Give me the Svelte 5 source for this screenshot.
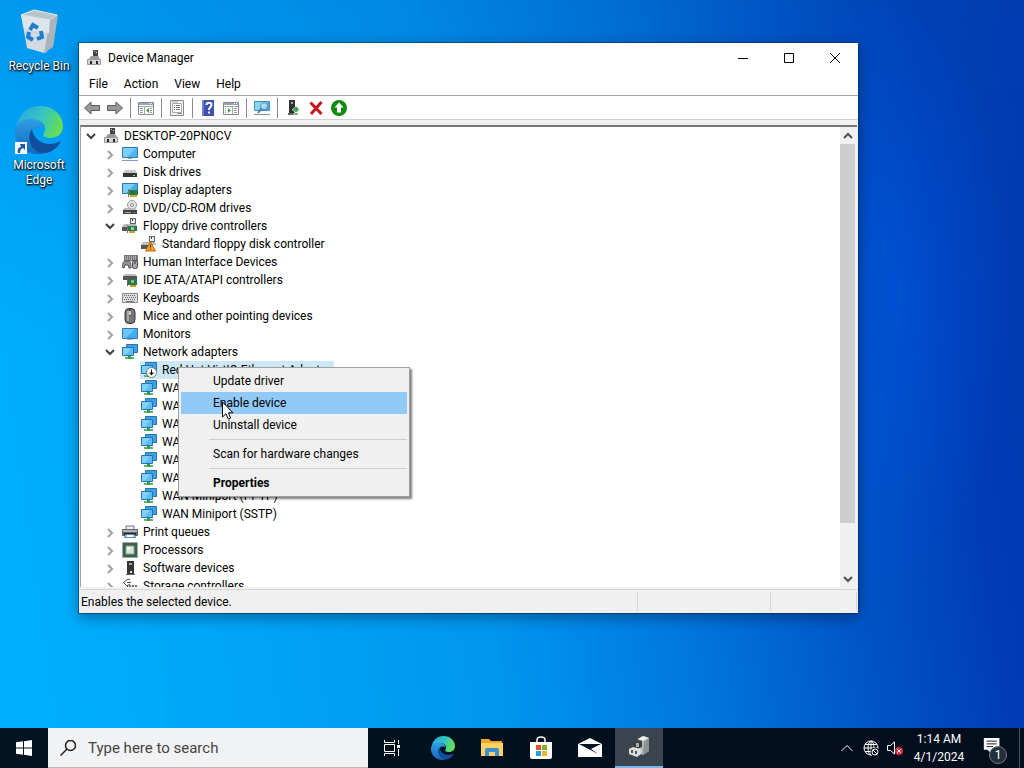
<script lang="ts">
  type Row = { level: number; icon: string; label: string; open?: boolean; selected?: boolean };

  const wan = (kind: string): Row => ({ level: 2, icon: "network", label: `WAN Miniport (${kind})` });

  const rows: Row[] = [
    { level: 0, icon: "devices", label: "DESKTOP-20PN0CV", open: true },
    { level: 1, icon: "computer", label: "Computer", open: false },
    { level: 1, icon: "disk", label: "Disk drives", open: false },
    { level: 1, icon: "display", label: "Display adapters", open: false },
    { level: 1, icon: "dvd", label: "DVD/CD-ROM drives", open: false },
    { level: 1, icon: "floppy", label: "Floppy drive controllers", open: true },
    { level: 2, icon: "warning", label: "Standard floppy disk controller" },
    { level: 1, icon: "hid", label: "Human Interface Devices", open: false },
    { level: 1, icon: "ide", label: "IDE ATA/ATAPI controllers", open: false },
    { level: 1, icon: "keyboard", label: "Keyboards", open: false },
    { level: 1, icon: "mouse", label: "Mice and other pointing devices", open: false },
    { level: 1, icon: "monitor", label: "Monitors", open: false },
    { level: 1, icon: "network", label: "Network adapters", open: true },
    { level: 2, icon: "disabled", label: "Red Hat VirtIO Ethernet Adapter", selected: true },
    wan("IKEv2"),
    wan("IP"),
    wan("IPv6"),
    wan("L2TP"),
    wan("Network Monitor"),
    wan("PPPOE"),
    wan("PPTP"),
    wan("SSTP"),
    { level: 1, icon: "printer", label: "Print queues", open: false },
    { level: 1, icon: "cpu", label: "Processors", open: false },
    { level: 1, icon: "software", label: "Software devices", open: false },
    { level: 1, icon: "storage", label: "Storage controllers", open: false },
  ];

  const menus = ["File", "Action", "View", "Help"];

  const tools = [
    ["back", "Back"],
    ["forward", "Forward"],
    null,
    ["paneLeft", "Show/Hide Console Tree"],
    null,
    ["props", "Properties"],
    null,
    ["help", "Help"],
    ["paneRight", "Show/Hide Action Pane"],
    null,
    ["scan", "Scan for hardware changes"],
    null,
    ["update", "Update driver"],
    ["remove", "Uninstall device"],
    ["enable", "Enable device"],
  ];
</script>

{#snippet icon(name: string)}
  <svg class="icon" viewBox="0 0 16 16" aria-hidden="true">
    {#if name === "devices"}
      <path d="M7 0h5v8H7z" fill="#444" />
      <path d="M8 1h1v1H8zM10 2h1v1h-1z" fill="#ddd" />
      <path d="M3 9l2-3h7l2 3z" fill="#999" />
      <path d="M1.500 9.500h13v5h-13z" fill="#d4d4d4" stroke="#999" />
      <path d="M4 11h2v3H4zM10 11h2v3h-2z" fill="#222" />
    {:else if name === "computer"}
      <path d="M.5 1.500h15v10H.5z" fill="#4fb6f2" stroke="#3379a6" />
      <path d="M1 2h13L5 11H1z" fill="#79d0fa" />
      <path d="M6 12h4v1H6z" fill="#8aa" />
      <path d="M0 14h16v1H0z" fill="#8d9ac0" />
    {:else if name === "disk"}
      <path d="M3 6h10l2 3H1z" fill="#c8c8c8" />
      <path d="M1 9h14v4H1z" fill="#333" />
      <path d="M11 11h2v1h-2z" fill="#6e6" />
    {:else if name === "display"}
      <path d="M.5 1.500h15v10H.5z" fill="#45aeea" stroke="#3379a6" />
      <path d="M1 2h12L4 11H1z" fill="#79d0fa" />
      <path d="M7 8h9v5H7z" fill="#2d7a4b" />
      <path d="M9 9h3v3H9z" fill="#173" />
      <path d="M8 13h7v2H8z" fill="#d5a920" />
      <path d="M6 7h1v8H6z" fill="#777" />
    {:else if name === "dvd"}
      <circle cx="10" cy="5" r="4.500" fill="#e4e4e4" stroke="#999" />
      <circle cx="10" cy="5" r="1.500" fill="#fff" stroke="#888" />
      <path d="M2 8h11l2 2H1z" fill="#bbb" />
      <path d="M1 10h14v4H1z" fill="#444" />
      <path d="M3 12h6v1H3z" fill="#aaa" />
      <path d="M12 12h1v1h-1z" fill="#6e6" />
    {:else if name === "floppy" || name === "warning"}
      <path d="M8 0h6v7H8z" fill="#666" />
      <path d="M9 1h4v4H9z" fill="#eee" />
      <path d="M10 1h1v2h-1z" fill="#444" />
      <path d="M2 6h12l1 3H0z" fill="#bbb" />
      <path d="M0 9h9v4H0z" fill="#555" />
      {#if name === "floppy"}
        <path d="M6 8h9v5H6z" fill="#297a52" />
        <path d="M9 9h3v3H9z" fill="#9c9" />
        <path d="M7 13h6v2H7z" fill="#caa326" />
        <path d="M5 7h1v8H5z" fill="#777" />
      {:else}
        <path d="M9.500 5.500l5 9.500h-10z" fill="#f6a623" stroke="#c2680c" />
        <path d="M9 8.500h1v3H9zM9 12.500h1v1H9z" fill="#222" />
      {/if}
    {:else if name === "hid"}
      <path d="M2 1h14v6H2z" fill="#777" />
      <path d="M3 3h12M3 5h12" stroke="#ddd" stroke-dasharray="1 1" />
      <path d="M1 14c-1-3 0-7 2-7h4c2 0 2 4 2 7H7l-1-3H3l-1 3z" fill="#8d9797" stroke="#555" />
      <rect x="10.500" y="6.500" width="5" height="8" rx="2" fill="#aaa" stroke="#444" />
      <path d="M13 7v3" stroke="#333" />
    {:else if name === "ide"}
      <path d="M3 2h10l2 2H1z" fill="#bbb" />
      <path d="M1 4h14v4H1z" fill="#555" />
      <path d="M6 7h9v6H6z" fill="#2b7446" />
      <path d="M9 8h3v3H9z" fill="#8b8" />
      <path d="M8 13h6v2H8z" fill="#caa326" />
      <path d="M5 6h1v8H5z" fill="#666" />
    {:else if name === "keyboard"}
      <path d="M.5 3.500h15v9H.5z" fill="#ddd" stroke="#888" />
      <path d="M2 5.500h12M3 7.500h11M2 9.500h12" stroke="#666" stroke-dasharray="1 1" />
      <path d="M4 11h8v1H4z" fill="#777" />
    {:else if name === "mouse"}
      <rect x="3" y=".5" width="10" height="15" rx="4" fill="#777" stroke="#333" />
      <path d="M5 3h2v10H5z" fill="#aaa" />
      <path d="M8 1v7" stroke="#222" />
      <path d="M7 3h2v4H7z" fill="#ccc" />
    {:else if name === "monitor"}
      <path d="M.5 2.500h15v10H.5z" fill="#42aef2" stroke="#3379a6" />
      <path d="M1 3h12L4 12H1z" fill="#69c5fa" />
      <path d="M5 13h6v1H5z" fill="#9bd" />
    {:else if name === "network" || name === "disabled"}
      <path d="M4.500 .5h11v8h-11z" fill="#3fa0e8" stroke="#2874a8" />
      <path d="M.5 3.500h11v8H.5z" fill="#5cbcf6" stroke="#2874a8" />
      <path d="M1 4h8l-5 7H1z" fill="#80d1fb" />
      <path d="M6 12h3v1H6z" fill="#387" />
      <path d="M3 13h9v2H3z" fill="#59b96a" />
      <path d="M6 12h3v3H6z" fill="#3c9a50" />
      {#if name === "disabled"}
        <circle cx="10.500" cy="10.500" r="5" fill="#fff" stroke="#777" />
        <path d="M10 7.500h1v3h2l-2.500 3L8 10.500h2z" fill="#111" />
      {/if}
    {:else if name === "printer"}
      <path d="M4 2h8v4H4z" fill="#eef" stroke="#777" />
      <path d="M0 5h16v7H0z" fill="#5f676f" />
      <path d="M1 6h14v2H1z" fill="#aeb5bb" />
      <path d="M2 9h12v2H2z" fill="#222" />
      <path d="M3.500 10.500h9l1 3h-11z" fill="#8fd0f6" stroke="#58a" />
      <path d="M5 11h6v2H5z" fill="#fff" />
    {:else if name === "cpu"}
      <path d="M1 1h14v14H1z" fill="#3c604b" />
      <path d="M.5 .5h15v15H.5z" fill="none" stroke="#365" stroke-dasharray="1 1" />
      <path d="M4 4h8v8H4z" fill="#d8e4d8" stroke="#8ba592" />
      <path d="M5 5h5l-5 5z" fill="#f4f8f4" />
    {:else if name === "software"}
      <path d="M5 1h7v14H5z" fill="#353535" />
      <path d="M7 3h3v2H7z" fill="#aaa" />
      <path d="M8 11h2v2H8z" fill="#ddd" />
      <path d="M4 14h9v1H4z" fill="#666" />
    {:else if name === "storage"}
      <path d="M8 2L6 1 1.500 4.500 5 8l3-2M5 4.500h4M5 8l3 3" fill="none" stroke="#444" />
      <path d="M7 7h8v4H7z" fill="#777" />
      <path d="M9 7h1v3H9zM12 7h1v3h-1z" fill="#ddd" />
    {:else if name === "back"}
      <path d="M.5 8L7 2v3.500h8.500v5H7V14z" fill="#999" stroke="#5b5b5b" />
    {:else if name === "forward"}
      <path d="M15.500 8L9 2v3.500H.5v5H9V14z" fill="#999" stroke="#5b5b5b" />
    {:else if name === "paneLeft" || name === "paneRight"}
      <path d="M.5 2.500h15v12H.5z" fill="#fff" stroke="#808890" />
      <path d="M1 3h14v2H1z" fill="#9aa4ad" />
      <path d="M11 3.500h3" stroke="#fff" stroke-dasharray="1 1" />
      <path d="M1 6.500h14" stroke="#aaa" />
      {#if name === "paneLeft"}
        <path d="M2 8.500h3M2 10.500h3M2 12.500h3M12 8.500h2M12 10.500h2M12 12.500h2" stroke="#999" />
        <path d="M6.500 7v7" stroke="#aaa" />
        <path d="M11 8v5L8 10.500z" fill="#46a046" />
      {:else}
        <path d="M11 8.500h3M11 10.500h3M11 12.500h3M2 8.500h1M2 10.500h1M2 12.500h1" stroke="#999" />
        <path d="M9.500 7v7" stroke="#aaa" />
        <path d="M5 8v5l3-2.500z" fill="#46a046" />
      {/if}
    {:else if name === "props"}
      <path d="M1.500 .5h13v15h-13z" fill="#f4f4f4" stroke="#8a8a8a" />
      <path d="M3.500 3.500h9v9h-9z" fill="#fff" stroke="#aaa" />
      <path d="M3 2h6" stroke="#aaa" />
      <path d="M5 5.500h1M7 5.500h4M5 7.500h1M7 7.500h4M5 9.500h1M7 9.500h4" stroke="#777" />
      <path d="M8 13.500h5" stroke="#999" />
    {:else if name === "help"}
      <path d="M2 0h12v16H2z" fill="#3c50ac" />
      <path d="M2 0h2v16H2z" fill="#6f80cb" />
      <path d="M6.500 5c0-3 5-3 5 0 0 2-2.500 2-2.500 5" fill="none" stroke="#fff" stroke-width="2" />
      <path d="M8 11.500h2v2H8z" fill="#fff" />
    {:else if name === "scan"}
      <path d="M.5 1.500h15v9H.5z" fill="#4aa8dd" stroke="#4390bd" />
      <path d="M1 2h13L5 10H1z" fill="#8cd3f4" />
      <path d="M0 14.500h16" stroke="#7f93a8" />
      <circle cx="10" cy="6" r="3.500" fill="#a9dcf6" stroke="#5b93b8" />
      <path d="M7.500 8.500L4 13" stroke="#47799c" stroke-width="2" />
    {:else if name === "update"}
      <path d="M4 0h6v14H4z" fill="#333" />
      <path d="M6 2h2v2H6z" fill="#aaa" />
      <path d="M3 13h8v2H3z" fill="#666" />
      <path d="M11 6l4 4h-2v2H9v-2H7zM9 13h4v2H9z" fill="#38a34a" stroke="#fff" stroke-width=".5" />
    {:else if name === "remove"}
      <path d="M2.500 2.500l11 11.500M13.500 2L3 14" fill="none" stroke="#c8141e" stroke-width="3" />
    {:else if name === "enable"}
      <circle cx="8" cy="8" r="8" fill="#128a14" />
      <path d="M8 2.500l4.500 5H10v5H6v-5H3.500z" fill="#fff" />
    {/if}
  </svg>
{/snippet}

{#snippet edge()}
  <svg class="edge" viewBox="0 0 48 48" aria-hidden="true">
    <defs>
      <linearGradient id="edge-top" x1="0" y1=".3" x2="1" y2=".6">
        <stop offset="0" stop-color="#2aa8e0" />
        <stop offset=".5" stop-color="#35c4c4" />
        <stop offset="1" stop-color="#6be04c" />
      </linearGradient>
      <linearGradient id="edge-left" x1="0" y1="0" x2="0" y2="1">
        <stop offset="0" stop-color="#2f9fe4" />
        <stop offset="1" stop-color="#1266c0" />
      </linearGradient>
    </defs>
    <path d="M1 22C3 9 12 0 25 0c14 0 23 10 23 20 0 8-6 12-13 12-5 0-8-2-6-5 4-7-2-13-10-13C10 14 4 17 1 22z" fill="url(#edge-top)" />
    <path d="M0 26c0-9 9-14 18-13 7 1 11 5 11 9-9-4-16 4-14 11 2 8 8 13 14 15C11 50 0 39 0 26z" fill="url(#edge-left)" />
    <path d="M17 23c-7 10 0 25 14 24 6-1 11-5 14-10 1-1 0-2-1-1-12 5-25 0-27-13z" fill="#114f9c" />
  </svg>
{/snippet}

<div class="screen">
  <main class="desktop">
    <div class="shortcuts">
      <button class="shortcut">
        <svg class="bin" viewBox="0 0 48 48" aria-hidden="true">
          <path d="M6 8l13-5 23 5-7 5z" fill="#b9c4cc" stroke="#e8f0f4" />
          <path d="M6 8l29 5-3 32-3 1-17-5z" fill="#d2dae0" />
          <path d="M35 13l8-5-5 32-9 6z" fill="#a9b4bd" />
          <path d="M6 8l29 5-1 13-25-4z" fill="#dde5ea" />
          <g fill="none" stroke="#1c7fd0" stroke-width="4">
            <path d="M15 23l3-5 5 3" />
            <path d="M26 24l1 6-5 2" />
            <path d="M18 33l-5-3 1-5" />
          </g>
        </svg>
        <span>Recycle Bin</span>
      </button>
      <button class="shortcut">
        <span class="linked">
          {@render edge()}
          <svg class="arrow" viewBox="0 0 12 12" aria-hidden="true">
            <path d="M0 0h12v12H0z" fill="#f4f6f8" />
            <path d="M3 11C2 7 4 5 6 5L5 2h5v6L8 6C6 7 5 8 5 11z" fill="#205a9e" />
          </svg>
        </span>
        <span>Microsoft Edge</span>
      </button>
    </div>

    <section class="window" aria-label="Device Manager">
      <header class="titlebar">
        {@render icon("devices")}
        <h1>Device Manager</h1>
        <button class="caption" aria-label="Minimize">
          <svg viewBox="0 0 10 10"><path d="M0 5.500h10" /></svg>
        </button>
        <button class="caption" aria-label="Maximize">
          <svg viewBox="0 0 10 10"><path d="M.5 .5h9v9h-9z" /></svg>
        </button>
        <button class="caption" aria-label="Close">
          <svg viewBox="0 0 10 10"><path d="M0 0l10 10M10 0L0 10" /></svg>
        </button>
      </header>
      <nav class="menubar">
        {#each menus as menu}
          <button>{menu}</button>
        {/each}
      </nav>
      <div class="toolbar" role="toolbar" aria-label="Standard">
        {#each tools as tool}
          {#if tool}
            <button aria-label={tool[1]}>{@render icon(tool[0])}</button>
          {:else}
            <i class="divider"></i>
          {/if}
        {/each}
      </div>

      <div class="pane">
        <ul class="tree">
          {#each rows as row}
            <li class="row level{row.level}">
              {#if row.open !== undefined}
                <button class="twisty" class:open={row.open} aria-label="Toggle {row.label}">
                  <svg viewBox="0 0 16 16">
                    <path d={row.open ? "M4 6l4 4 4-4" : "M6 5l4 4-4 4"} />
                  </svg>
                </button>
              {/if}
              <span class="node" class:selected={row.selected}>
                {@render icon(row.icon)}
                <span>{row.label}</span>
              </span>
            </li>
          {/each}
        </ul>
        <div class="scrollbar">
          <button aria-label="Scroll up"><svg viewBox="0 0 16 16"><path d="M4 10l4-4 4 4" /></svg></button>
          <div class="track"><div class="thumb"></div></div>
          <button aria-label="Scroll down"><svg viewBox="0 0 16 16"><path d="M4 6l4 4 4-4" /></svg></button>
        </div>
      </div>

      <footer class="status">
        <span>Enables the selected device.</span>
        <span></span>
        <span></span>
      </footer>
    </section>

    <div class="context" role="menu">
      <button role="menuitem">Update driver</button>
      <button role="menuitem" class="hot">Enable device</button>
      <button role="menuitem">Uninstall device</button>
      <hr />
      <button role="menuitem">Scan for hardware changes</button>
      <hr />
      <button role="menuitem" class="default">Properties</button>
    </div>

    <svg class="cursor" viewBox="0 0 12 19" aria-hidden="true">
      <path d="M.5 1v15l3.500-3.300L6.300 18l2.400-1-2.300-5.200H11z" fill="#fff" stroke="#000" />
    </svg>
  </main>

  <footer class="taskbar">
    <button class="start" aria-label="Start">
      <svg viewBox="0 0 16 16">
        <path d="M0 2.300L7 1.300v6.200H0zM8 1.200L16 0v7.500H8zM0 8.500h7v6.200l-7-1zM8 8.500h8V16l-8-1.200z" fill="#fff" />
      </svg>
    </button>
    <label class="search">
      <svg viewBox="0 0 16 16" aria-hidden="true">
        <circle cx="10.500" cy="5.500" r="5" />
        <path d="M7 9L.5 15.500" />
      </svg>
      <input type="text" placeholder="Type here to search" aria-label="Search" />
    </label>
    <div class="apps">
      <button class="taskview" aria-label="Task View">
        <svg viewBox="0 0 16 16">
          <path d="M.5 0v2.500h10V0M.5 16v-2.500h10V16M.5 4.500h10v7H.5zM14.500 0v4M14.500 9v7" fill="none" stroke="#fff" />
          <path d="M13 5h3v3h-3z" fill="#fff" />
        </svg>
      </button>
      <button aria-label="Microsoft Edge">{@render edge()}</button>
      <button aria-label="File Explorer">
        <svg class="big" viewBox="0 0 24 24">
          <path d="M1 3h8l2 2h11v15H1z" fill="#e9a927" />
          <path d="M1 7h22v13H1z" fill="#fcd364" />
          <path d="M5 20v-6q0-2 2-2h10q2 0 2 2v6h-4v-4H9v4z" fill="#3f8fce" />
        </svg>
      </button>
      <button aria-label="Microsoft Store">
        <svg class="big" viewBox="0 0 24 24">
          <path d="M8 6V4c0-4 8-4 8 0v2" fill="none" stroke="#fff" stroke-width="1.500" />
          <path d="M1 6h22v15q0 2-2 2H3q-2 0-2-2z" fill="#fff" />
          <path d="M7 9h5v5H7z" fill="#e8502c" />
          <path d="M13 9h5v5h-5z" fill="#7cb62c" />
          <path d="M7 15h5v5H7z" fill="#1e9fe0" />
          <path d="M13 15h5v5h-5z" fill="#f6b81c" />
        </svg>
      </button>
      <button aria-label="Mail">
        <svg class="big" viewBox="0 0 24 24">
          <path d="M0 8l12-6 12 6v13H0z" fill="#fff" />
          <path d="M1 8h22l-10 5 7 5z" fill="#04131f" />
        </svg>
      </button>
      <button class="active" aria-label="Device Manager">
        <svg class="big" viewBox="0 0 24 24">
          <path d="M11 4l5-3 6 2v13l-6 4-6-3z" fill="#b8bab8" />
          <path d="M11 4l5-3 6 2-5 3z" fill="#eeeeec" />
          <path d="M17 6l5-3v13l-6 4z" fill="#8e9191" />
          <path d="M7 7l5-2 3 1v6l-5 2-3-2z" fill="#3b3e3e" />
          <path d="M9 8h3v4H9z" fill="#aaa" />
          <path d="M2 14l4-2 8 2v5l-4 3-8-3z" fill="#dcdedc" />
          <path d="M4 15h2v3H4zM8 16h2v3H8z" fill="#555" />
        </svg>
      </button>
    </div>
    <div class="tray">
      <button aria-label="Show hidden icons">
        <svg viewBox="0 0 16 16"><path d="M2.500 11L8 5.500l5.500 5.500" /></svg>
      </button>
      <button aria-label="Network">
        <svg viewBox="0 0 16 16">
          <circle cx="8" cy="8" r="7" />
          <ellipse cx="8" cy="8" rx="3" ry="7" />
          <path d="M8 1v14M1 8h14M2 4.500h12M2 11.500h12" />
          <circle cx="12" cy="12" r="4" fill="#020d1d" stroke="#020d1d" />
          <circle cx="12" cy="12" r="3" />
          <path d="M10 10l4 4" />
        </svg>
      </button>
      <button aria-label="Volume">
        <svg viewBox="0 0 16 16">
          <path d="M.5 5.500h3L7.500 2v12l-4-3.500h-3z" />
          <circle cx="12" cy="11" r="4" fill="#d8323a" stroke="none" />
          <path d="M10.300 9.300l3.400 3.400M13.700 9.300l-3.400 3.400" />
        </svg>
      </button>
      <button class="clock"><span>1:14 AM</span><span>4/1/2024</span></button>
      <button class="action" aria-label="Notifications">
        <svg viewBox="0 0 24 24">
          <path d="M2 1h17v13h-9v4l-4-4H2z" fill="#fff" stroke="none" />
          <path d="M5 4.500h11M5 7.500h11M5 10.500h7" stroke="#020d1d" />
        </svg>
        <span class="badge">1</span>
      </button>
      <button class="peek" aria-label="Show desktop"></button>
    </div>
  </footer>
</div>

<style>
  :global(body) {
    overflow: hidden;
  }
  .screen {
    display: flex;
    flex-direction: column;
    height: 100vh;
    font: 12px/18px Roboto, "Noto Sans", sans-serif;
    color: #000;
    background:
      radial-gradient(ellipse 12% 40% at 87% 38%, rgba(0, 90, 230, 0.5), transparent),
      linear-gradient(to top, transparent 55%, rgba(0, 80, 180, 0.2)),
      linear-gradient(
        82deg,
        #00b0ff 0%,
        #00a6fa 20%,
        #0096f0 45%,
        #0078de 62%,
        #0054c8 78%,
        #003cb6 90%,
        #0038b0 100%
      );
  }
  button {
    margin: 0;
    padding: 0;
    border: 0;
    background: none;
    font: inherit;
    color: inherit;
  }
  .icon {
    display: block;
    flex: none;
    width: 16px;
    height: 16px;
  }
  .desktop {
    position: relative;
    flex: 1;
    min-height: 0;
  }

  /* desktop shortcuts */
  .shortcuts {
    display: flex;
    flex-direction: column;
    gap: 32px;
    width: 78px;
    padding-top: 7px;
  }
  .shortcut {
    display: flex;
    flex-direction: column;
    align-items: center;
    gap: 4px;
    line-height: 15px;
    color: #fff;
    text-shadow: 0 1px 2px #000, 1px 1px 2px #000;
  }
  .bin,
  .edge {
    display: block;
    width: 48px;
    height: 48px;
  }
  .linked {
    position: relative;
  }
  .arrow {
    position: absolute;
    left: 0;
    bottom: 0;
    width: 12px;
    height: 12px;
  }

  /* window */
  .window {
    position: absolute;
    inset: 43px 166px 115px 79px;
    display: flex;
    flex-direction: column;
    background: #fff;
    box-shadow: 0 0 0 1px rgba(0, 50, 100, 0.6), 0 4px 14px rgba(0, 0, 0, 0.4);
  }
  .titlebar {
    display: flex;
    align-items: center;
    height: 30px;
    padding-left: 7px;
  }
  h1 {
    flex: 1;
    margin: 0 0 0 6px;
    font: inherit;
  }
  .caption {
    display: grid;
    place-items: center;
    width: 46px;
    height: 28px;
  }
  .caption svg {
    width: 10px;
    height: 10px;
    fill: none;
    stroke: #000;
  }
  .menubar {
    display: flex;
    height: 22px;
    padding-left: 2px;
    border-bottom: 1px solid #a5a5a5;
  }
  .menubar button {
    padding: 0 8px;
  }
  .toolbar {
    display: flex;
    align-items: center;
    height: 23px;
    padding-left: 1px;
    border-bottom: 1px solid #d0d0d0;
  }
  .toolbar button {
    display: grid;
    place-items: center;
    width: 23px;
    height: 22px;
  }
  .divider {
    width: 1px;
    height: 20px;
    margin: 0 3px 0 4px;
    background: #8c8c8c;
  }
  .pane {
    display: flex;
    flex: 1;
    min-height: 0;
    border: solid #f0f0f0;
    border-width: 5px 1px 2px 1px;
  }
  .tree {
    flex: 1;
    margin: 0;
    padding: 0;
    overflow: hidden;
    list-style: none;
    border-top: 2px solid #767676;
    border-left: 1px solid #a0a0a0;
  }
  .row {
    display: flex;
    align-items: center;
    height: 18px;
    white-space: nowrap;
  }
  .level0 {
    padding-left: 2px;
  }
  .level1 {
    padding-left: 21px;
  }
  .level2 {
    padding-left: 59px;
  }
  .twisty {
    width: 16px;
    height: 16px;
    margin-right: 3px;
  }
  .twisty svg {
    display: block;
    fill: none;
    stroke: #a0a0a0;
    stroke-width: 2;
  }
  .twisty.open svg {
    stroke: #404040;
  }
  .node {
    display: flex;
    align-items: center;
    gap: 5px;
    height: 18px;
    padding: 0 3px 0 1px;
  }
  .selected {
    background: #cce8f8;
  }
  .scrollbar {
    display: flex;
    flex-direction: column;
    width: 17px;
    background: #f0f0f0;
    border-top: 2px solid #767676;
  }
  .scrollbar button {
    height: 17px;
  }
  .scrollbar svg {
    display: block;
    width: 16px;
    height: 16px;
    fill: none;
    stroke: #505050;
    stroke-width: 2;
  }
  .track {
    flex: 1;
  }
  .thumb {
    width: 15px;
    height: 89%;
    background: #cdcdcd;
  }
  .status {
    display: flex;
    height: 23px;
    background: #f0f0f0;
    border-top: 1px solid #d7d7d7;
  }
  .status span {
    width: 132px;
    margin: 2px 0;
    line-height: 20px;
    border-right: 1px solid #d7d7d7;
  }
  .status span:first-child {
    flex: 1;
    padding-left: 2px;
  }
  .status span:last-child {
    width: 85px;
    margin-right: 1px;
  }

  /* context menu */
  .context {
    position: absolute;
    left: 178px;
    top: 367px;
    display: flex;
    flex-direction: column;
    width: 226px;
    padding: 2px;
    background: #f0f0f0;
    border: 1px solid #a0a0a0;
    box-shadow: 2px 2px 2px rgba(0, 0, 0, 0.5);
  }
  .context button {
    height: 22px;
    padding-left: 32px;
    text-align: left;
  }
  .context .hot {
    background: #91c9f7;
  }
  .context .default {
    font-weight: 700;
  }
  .context hr {
    width: 198px;
    height: 1px;
    margin: 3px 0 3px auto;
    border: 0;
    background: #cfcfcf;
  }
  .cursor {
    position: absolute;
    left: 222px;
    top: 401px;
    width: 12px;
    height: 19px;
  }

  /* taskbar */
  .taskbar {
    display: flex;
    height: 40px;
    color: #fff;
    background: linear-gradient(90deg, #02141f, #020d1d);
  }
  .taskbar button {
    display: grid;
    place-items: center;
  }
  .start {
    width: 48px;
  }
  .start svg,
  .taskview svg {
    width: 16px;
    height: 16px;
  }
  .search {
    display: flex;
    align-items: center;
    gap: 12px;
    box-sizing: border-box;
    width: 320px;
    padding: 0 12px;
    background: #f1f2f3;
    border-bottom: 1px solid #b8b8b8;
  }
  .search svg {
    flex: none;
    width: 16px;
    height: 16px;
    fill: none;
    stroke: #222;
    stroke-width: 1.5;
  }
  .search input {
    flex: 1;
    min-width: 0;
    padding: 0;
    border: 0;
    outline: 0;
    background: none;
    font: 15px Roboto, "Noto Sans", sans-serif;
  }
  .search input::placeholder {
    color: #444;
    opacity: 1;
  }
  .apps {
    display: flex;
    flex: 1;
    gap: 1px;
  }
  .apps button {
    width: 48px;
  }
  .apps .taskview {
    margin-right: 2px;
  }
  .apps .edge,
  .big {
    width: 24px;
    height: 24px;
  }
  .apps .active {
    box-sizing: border-box;
    background: #3a444f;
    border-bottom: 2px solid #76b9ed;
  }
  .tray {
    display: flex;
  }
  .tray button {
    width: 24px;
  }
  .tray svg {
    width: 16px;
    height: 16px;
    fill: none;
    stroke: #fff;
  }
  .tray .clock {
    align-content: center;
    width: 64px;
  }
  .tray .action {
    position: relative;
    width: 48px;
    padding-right: 4px;
  }
  .tray .action svg {
    width: 22px;
    height: 22px;
  }
  .badge {
    position: absolute;
    right: 12px;
    bottom: 4px;
    width: 16px;
    border: 1px solid #777;
    border-radius: 50%;
    background: #22303c;
    line-height: 16px;
    text-align: center;
  }
  .tray .peek {
    width: 5px;
    border-left: 1px solid #4a5560;
  }
</style>
